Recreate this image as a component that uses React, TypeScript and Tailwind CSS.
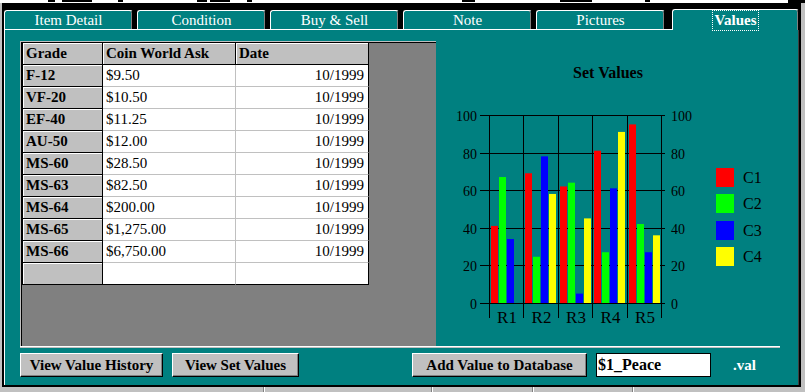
import React from "react";

const tabs = ["Item Detail", "Condition", "Buy & Sell", "Note", "Pictures"];

const grades = [
  { grade: "F-12", ask: "$9.50", date: "10/1999" },
  { grade: "VF-20", ask: "$10.50", date: "10/1999" },
  { grade: "EF-40", ask: "$11.25", date: "10/1999" },
  { grade: "AU-50", ask: "$12.00", date: "10/1999" },
  { grade: "MS-60", ask: "$28.50", date: "10/1999" },
  { grade: "MS-63", ask: "$82.50", date: "10/1999" },
  { grade: "MS-64", ask: "$200.00", date: "10/1999" },
  { grade: "MS-65", ask: "$1,275.00", date: "10/1999" },
  { grade: "MS-66", ask: "$6,750.00", date: "10/1999" },
  { grade: "", ask: "", date: "" },
];

// set values per row R1..R5, series C1..C4
const series = [
  [41, 67, 34, 0],
  [69, 24.6, 78, 58],
  [62, 64, 5, 45],
  [81, 27, 61, 91],
  [95, 42, 27, 36],
];
const seriesColors = ["#ff0000", "#00ff00", "#0000ff", "#ffff00"];

function yOf(v: number) {
  return 262 - v * 1.88;
}
function xOf(i: number) {
  return Math.round(53 + i * 34.4);
}

function Tab({ label }: { label: string }) {
  return (
    <div className="mt-[1px] flex h-[19px] w-[129px] items-center justify-center rounded-t-[3px] border-t border-l border-r border-t-white border-l-white border-r-black bg-[#008080] text-[15px] leading-none text-white shadow-[inset_-1px_0_0_#808080]">
      {label}
    </div>
  );
}

function WinButton({ label, className }: { label: string; className: string }) {
  return (
    <button
      className={
        "flex h-[24px] items-center justify-center border border-t-white border-l-white border-r-black border-b-black bg-[#c0c0c0] text-[15px] font-bold leading-none text-black shadow-[inset_-1px_-1px_0_#808080] " +
        className
      }
    >
      {label}
    </button>
  );
}

function ValueGrid() {
  return (
    <div className="h-[305px] w-[416px] border-t border-l border-[#c0c0c0] bg-[#808080]">
      <div className="h-full border-t border-l border-black">
        <div className="grid w-[347px] grid-cols-[80px_133px_133px] border-l border-black text-[15px] leading-none text-black">
          {["Grade", "Coin World Ask", "Date"].map((h) => (
            <div
              key={h}
              className="flex h-[22px] items-center border-r border-b border-black bg-[#c0c0c0] pl-[3px] font-bold shadow-[inset_1px_1px_0_#ffffff]"
            >
              {h}
            </div>
          ))}
          {grades.map((row, i) => {
            const last = i === grades.length - 1;
            return (
              <React.Fragment key={i}>
                <div
                  className={
                    "flex h-[22px] items-center border-r border-b border-black bg-[#c0c0c0] pl-[3px] font-bold shadow-[inset_1px_1px_0_#ffffff]"
                  }
                >
                  {row.grade}
                </div>
                <div
                  className={
                    "flex h-[22px] items-center border-r border-b border-r-[#c0c0c0] bg-white pl-[3px] " +
                    (last ? "border-b-black" : "border-b-[#c0c0c0]")
                  }
                >
                  {row.ask}
                </div>
                <div
                  className={
                    "flex h-[22px] items-center justify-end border-r border-b border-r-black bg-white pr-[4px] " +
                    (last ? "border-b-black" : "border-b-[#c0c0c0]")
                  }
                >
                  {row.date}
                </div>
              </React.Fragment>
            );
          })}
        </div>
      </div>
    </div>
  );
}

function SetValuesChart() {
  const ticks = [0, 20, 40, 60, 80, 100];
  return (
    <svg width="344" height="305" className="font-['Liberation_Serif',serif]">
      <text x="172" y="36.5" textAnchor="middle" fontSize="16" fontWeight="bold" fill="#000">
        Set Values
      </text>
      {ticks.map((t) => {
        const y = Math.round(yOf(t)) + 0.5;
        return (
          <g key={t}>
            <line x1="44" x2="229" y1={y} y2={y} stroke="#000" strokeWidth="1" />
            <text x="41" y={y + 5} textAnchor="end" fontSize="14" fill="#000">
              {t}
            </text>
            <text x="235" y={y + 5} textAnchor="start" fontSize="14" fill="#000">
              {t}
            </text>
          </g>
        );
      })}
      {[0, 1, 2, 3, 4, 5].map((i) => (
        <line key={i} x1={xOf(i) + 0.5} x2={xOf(i) + 0.5} y1="74" y2="277" stroke="#000" strokeWidth="1" />
      ))}
      {series.map((row, i) =>
        row.map((v, j) =>
          v > 0 ? (
            <rect
              key={i + "-" + j}
              x={xOf(i) + 2 + j * 8}
              y={yOf(v)}
              width="7"
              height={v * 1.88}
              fill={seriesColors[j]}
            />
          ) : null
        )
      )}
      {series.map((_, i) => (
        <text key={i} x={(xOf(i) + xOf(i + 1)) / 2 + 1} y="281.5" textAnchor="middle" fontSize="17" fill="#000">
          {"R" + (i + 1)}
        </text>
      ))}
      {seriesColors.map((c, k) => (
        <g key={c}>
          <rect x="280" y={Math.round(126.7 + k * 26.4)} width="18" height="19" fill={c} />
          <text x="307" y={142 + k * 26.4} fontSize="16" fill="#000">
            {"C" + (k + 1)}
          </text>
        </g>
      ))}
    </svg>
  );
}

export default function App() {
  return (
    <div className="flex h-[392px] w-[805px] flex-col overflow-hidden bg-black font-['Liberation_Serif',serif]">
      {/* cut-off strip of the window above */}
      <div className="flex h-[3px] items-start bg-white">
        <span className="ml-[48px] h-[2px] w-[7px] bg-black" />
        <span className="ml-[7px] h-[2px] w-[30px] bg-black" />
        <span className="ml-[26px] h-[2px] w-[5px] bg-black" />
        <span className="ml-[74px] h-[2px] w-[10px] bg-black" />
        <span className="ml-[3px] h-[2px] w-[20px] bg-black" />
        <span className="ml-[17px] h-[2px] w-[5px] bg-black" />
        <span className="ml-[210px] h-[2px] w-[13px] bg-black" />
        <span className="ml-[85px] h-[2px] w-[32px] bg-black" />
        <span className="ml-[53px] h-[2px] w-[5px] bg-black" />
        <span className="ml-auto h-[3px] w-[17px] bg-black" />
      </div>

      <div className="flex min-h-0 flex-1">
        <div className="w-[2px] bg-[#c0c0c0]" />
        <div className="flex flex-1 flex-col px-[2px] pt-[6px] pb-[2px]">
          <div className="relative z-10 flex h-[20px] items-start gap-1">
            {tabs.map((t) => (
              <Tab key={t} label={t} />
            ))}
            <div className="ml-[3px] flex h-[21px] w-[127px] items-center justify-center rounded-t-[3px] border-t border-l border-r border-t-white border-l-white border-r-black bg-[#008080] shadow-[inset_-1px_0_0_#808080]">
              <span className="border border-dotted border-white px-[2px] py-[2px] text-[15px] font-bold leading-none text-white">
                Values
              </span>
            </div>
          </div>

          <div className="flex flex-1 flex-col border-t border-l border-r border-t-white border-l-white border-r-[#404040] bg-[#008080] pt-[11px] pl-[15px]">
            <div className="flex h-[305px]">
              <ValueGrid />
              <SetValuesChart />
            </div>
            <div className="h-[2px] w-[760px] border-b border-[#c0c0c0] bg-white" />
            <div className="mt-[5px] flex h-[24px] items-center">
              <WinButton label="View Value History" className="w-[143px]" />
              <WinButton label="View Set Values" className="ml-[9px] w-[127px]" />
              <WinButton label="Add Value to Database" className="ml-[113px] w-[175px]" />
              <input
                readOnly
                value="$1_Peace"
                className="ml-[9px] h-[24px] w-[115px] border border-black bg-white pl-[1px] text-[16px] font-bold text-black outline-none"
              />
              <span className="ml-[22px] text-[15px] font-bold leading-none text-white">.val</span>
            </div>
          </div>
        </div>
        <div className="w-[4px] bg-[#c0c0c0]" />
      </div>

      <div className="flex h-[5px] bg-[#c0c0c0]">
        <div className="w-[264px] border-r border-[#808080]" />
        <div className="w-[168px] border-r border-l border-r-[#808080] border-l-white" />
        <div className="w-[101px] border-r border-l border-r-[#808080] border-l-white" />
        <div className="w-[100px] border-r border-l border-r-[#808080] border-l-white" />
        <div className="flex-1 border-l border-white" />
      </div>
    </div>
  );
}
